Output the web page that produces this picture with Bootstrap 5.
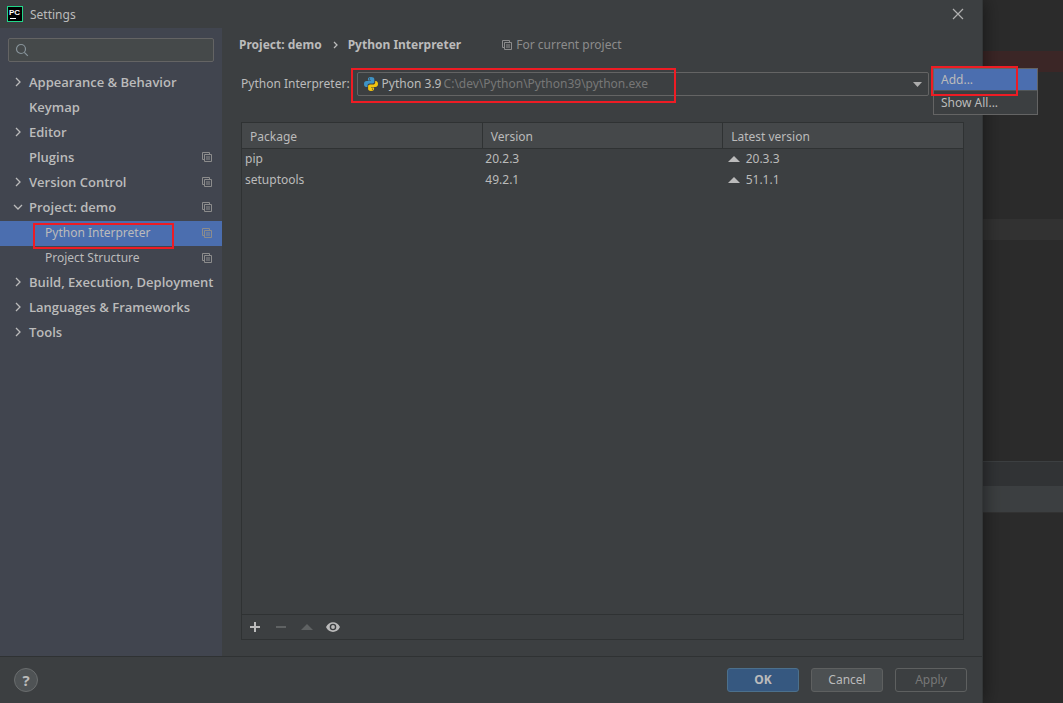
<!DOCTYPE html>
<html lang="en" data-bs-theme="dark">
<head>
<meta charset="utf-8">
<meta name="viewport" content="width=device-width, initial-scale=1">
<title>Settings</title>
<link href="https://cdn.jsdelivr.net/npm/bootstrap@5.3.0/dist/css/bootstrap.min.css" rel="stylesheet">
<style>
  :root { --panel: #3c3f41; --side: #41454f; --line: #2f3233; --ink: #bbbbbb; --soft: #8c8c8c; --edge: #646464; --blue: #4b6eaf; --mark: #ee1c24; }
  body { font-family: "Noto Sans", "Open Sans", sans-serif; font-size: 12px; line-height: 20px; color: var(--ink); background: #2b2b2b; }
  svg { display: block; flex: none; }
  .dialog { background: var(--panel); box-shadow: 0 0 18px rgba(0,0,0,.5); border-right: 1px solid #333637; z-index: 1; min-width: 0; }
  .titlebar { height: 28px; padding: 0 16px 0 7px; }
  .titlebar span { padding-top: 2px; margin-left: 7px; }
  .plain { background: none; border: 0; padding: 0; color: inherit; }
  .sidebar { width: 222px; background: var(--side); }
  .searchbox { height: 24px; margin: 10px 8px 9px; padding: 0 6px; border: 1px solid var(--edge); border-radius: 2px; background: #45494a; }
  .searchbox input { background: none; border: 0; outline: 0; color: var(--ink); min-width: 0; }
  .tree a { height: 25px; padding: 0 10px 3px 12px; color: var(--ink); text-decoration: none; font-family: "Open Sans", "Noto Sans", sans-serif; font-size: 13px; font-weight: 600; }
  .tree .twist { width: 12px; margin-right: 5px; }
  .tree .leaf { padding: 0 10px 1px 45px; font-family: "Noto Sans", sans-serif; font-size: 12px; font-weight: 400; }
  .tree .chosen { background: var(--blue); position: relative; }
  .outline { position: absolute; border: 2px solid var(--mark); pointer-events: none; z-index: 5; }
  .chosen .outline { left: 33px; right: 48px; top: 2px; bottom: -3px; }
  .content { padding: 7px 18px 16px 19px; min-width: 0; }
  .crumbs { height: 20px; margin: 0 0 17px -2px; }
  .crumbs strong { font-weight: 700; }
  .crumbs .chevron { margin: 0 9px; }
  .crumbs .scope { margin-left: 41px; }
  .muted { color: var(--soft); }
  .picker { height: 24px; margin-bottom: 26px; margin-right: -74px; position: relative; }
  .combo { height: 24px; border: 1px solid var(--edge); border-radius: 2px; padding: 0 6px; margin-left: 7px; position: relative; }
  .combo select { appearance: none; background: none; border: 0; outline: 0; padding: 0; color: var(--ink); }
  .combo .path { color: #777777; margin-left: 2px; }
  .combo .outline { left: -7px; width: 325px; top: -5px; bottom: -8px; }
  .actions { width: 105px; margin: -4px 0 0 4px; border: 1px solid var(--edge); background: var(--panel); position: relative; align-self: flex-start; }
  .actions button { display: block; width: 100%; height: 22px; padding: 0 7px; text-align: left; line-height: 20px; }
  .actions button + button { height: 23px; line-height: 22px; }
  .actions .active { background: var(--blue); border-bottom: 1px solid #515658; }
  .actions .outline { left: -3px; width: 87px; top: -3px; height: 30px; }
  .packages { border: 1px solid var(--line); }
  .packages table { table-layout: fixed; }
  .packages th { font-weight: 400; height: 25px; padding: 4px 8px 0; background: #45484a; border-bottom: 1px solid var(--line); }
  .packages th + th { border-left: 1px solid var(--line); }
  .packages td { height: 21px; padding: 0 3px 1px; }
  .packages td svg { margin: 0 6px 0 2px; }
  .tools { height: 25px; border-top: 1px solid var(--line); padding: 0 5px; gap: 10px; }
  .footer-bar { height: 47px; border-top: 1px solid var(--line); padding: 0 15px 0 14px; }
  .footer-buttons { gap: 12px; }
  .footer-bar .btn { --bs-btn-padding-x: 0; --bs-btn-padding-y: 0; --bs-btn-font-size: 12px; width: 72px; height: 24px; line-height: 22px; border: 1px solid #5e6060; border-radius: 3px; color: var(--ink); background: #4c5052; }
  .footer-bar .ok { background: #365880; border-color: #4c708c; font-weight: 700; }
  .footer-bar .btn:disabled { background: none; color: #777777; opacity: 1; }
  .help { width: 24px; height: 24px; border: 1px solid #6a6d6e; border-radius: 50%; background: #4f5355; font-size: 15px; font-weight: 700; }
  .backdrop { width: 80px; }
  .band-error { margin-top: 51px; height: 21px; background: #3b2626; }
  .band-line { margin-top: 147px; height: 21px; background: #323232; }
  .band-head { margin-top: 221px; height: 25px; background: #313335; border-top: 1px solid #3c3f41; }
  .band-bar { height: 27px; background: #3c3f41; border-bottom: 1px solid #323232; }
</style>
</head>
<body>
<svg class="d-none">
  <symbol id="copy" viewBox="0 0 10 10"><path d="M2.500 7.500h-2v-7h7v2M2.500 2.500h7v7h-7zM4 5h4M4 7h4" fill="none" stroke="currentColor"/></symbol>
  <symbol id="right" viewBox="0 0 12 12"><path d="M4 2l4 4-4 4" fill="none" stroke="currentColor" stroke-width="1.3"/></symbol>
  <symbol id="down" viewBox="0 0 12 12"><path d="M2 4l4 4 4-4" fill="none" stroke="currentColor" stroke-width="1.3"/></symbol>
  <symbol id="up" viewBox="0 0 12 6"><path d="M0 6L6 0l6 6z" fill="currentColor"/></symbol>
</svg>
<div class="d-flex vh-100 overflow-hidden">
  <div class="dialog d-flex flex-column flex-grow-1">
    <header class="titlebar d-flex align-items-center">
      <svg width="16" height="16" viewBox="0 0 16 16"><rect x=".5" y=".5" width="15" height="15" fill="#000" stroke="#21d789"/><text x="2" y="9" font-family="Liberation Sans" font-size="8" font-weight="700" fill="#fff">PC</text><path d="M3 12.500h6" stroke="#fff"/></svg>
      <span class="me-auto">Settings</span>
      <button class="plain" aria-label="Close"><svg width="16" height="16" viewBox="0 0 16 16"><path d="M3 3l10 10M13 3L3 13" stroke="#b0b0b0" stroke-width="1.2"/></svg></button>
    </header>
    <div class="d-flex flex-grow-1">
      <aside class="sidebar flex-shrink-0">
        <label class="searchbox d-flex align-items-center">
          <svg width="14" height="14" viewBox="0 0 14 14"><g fill="none" stroke="#87939a" stroke-width="1.2"><circle cx="6" cy="6" r="4.500"/><path d="M9.300 9.300l3.500 3.500"/></g></svg>
          <input class="flex-grow-1" type="text" aria-label="Search settings">
        </label>
        <nav class="tree">
          <a href="#" class="d-flex align-items-center"><svg class="twist" height="12"><use href="#right"/></svg><span>Appearance &amp; Behavior</span></a>
          <a href="#" class="d-flex align-items-center"><span class="twist"></span><span>Keymap</span></a>
          <a href="#" class="d-flex align-items-center"><svg class="twist" height="12"><use href="#right"/></svg><span>Editor</span></a>
          <a href="#" class="d-flex align-items-center"><span class="twist"></span><span class="me-auto">Plugins</span><svg class="muted" width="10" height="10"><use href="#copy"/></svg></a>
          <a href="#" class="d-flex align-items-center"><svg class="twist" height="12"><use href="#right"/></svg><span class="me-auto">Version Control</span><svg class="muted" width="10" height="10"><use href="#copy"/></svg></a>
          <a href="#" class="d-flex align-items-center"><svg class="twist" height="12"><use href="#down"/></svg><span class="me-auto">Project: demo</span><svg class="muted" width="10" height="10"><use href="#copy"/></svg></a>
          <a href="#" class="leaf chosen d-flex align-items-center"><span class="me-auto">Python Interpreter</span><svg class="muted" width="10" height="10"><use href="#copy"/></svg><span class="outline"></span></a>
          <a href="#" class="leaf d-flex align-items-center"><span class="me-auto">Project Structure</span><svg class="muted" width="10" height="10"><use href="#copy"/></svg></a>
          <a href="#" class="d-flex align-items-center"><svg class="twist" height="12"><use href="#right"/></svg><span class="text-nowrap">Build, Execution, Deployment</span></a>
          <a href="#" class="d-flex align-items-center"><svg class="twist" height="12"><use href="#right"/></svg><span>Languages &amp; Frameworks</span></a>
          <a href="#" class="d-flex align-items-center"><svg class="twist" height="12"><use href="#right"/></svg><span>Tools</span></a>
        </nav>
      </aside>
      <main class="content d-flex flex-column flex-grow-1">
        <div class="crumbs d-flex align-items-center">
          <strong>Project: demo</strong>
          <svg class="chevron" width="8" height="8" viewBox="0 0 8 8"><path d="M3 1l3 3-3 3" fill="none" stroke="#bbb" stroke-width="1.300"/></svg>
          <strong>Python Interpreter</strong>
          <svg class="muted scope me-1" width="10" height="10"><use href="#copy"/></svg>
          <span class="muted">For current project</span>
        </div>
        <div class="picker d-flex align-items-center">
          <label for="interpreter" class="text-nowrap">Python Interpreter:</label>
          <div class="combo d-flex align-items-center flex-grow-1">
            <svg class="me-1" width="14" height="14" viewBox="0 0 16 16"><path d="M8 0C5 0 4.500 1.200 4.500 2.500V4H8v.7H3C1 4.700 0 6 0 8s1 3.500 2.500 3.500H4V9.700C4 8.300 5 7.300 6.500 7.300h3.300c1.200 0 2-.8 2-2V2.500C11.800 1 10.500 0 8 0z" fill="#3f93c5"/><path d="M8 16c3 0 3.500-1.200 3.500-2.500V12H8v-.7h5c2 0 3-1.300 3-3.300s-1-3.500-2.500-3.500H12.800v1.800c0 1.400-1.200 2.400-2.500 2.400H7c-1.200 0-2.300.8-2.300 2v2.800C4.700 15 5.500 16 8 16z" fill="#f2c40f"/><circle cx="6.300" cy="2.200" r=".7" fill="#3c3f41"/><circle cx="9.700" cy="13.800" r=".7" fill="#3c3f41"/></svg>
            <select id="interpreter"><option>Python 3.9</option></select>
            <span class="path me-auto">C:\dev\Python\Python39\python.exe</span>
            <svg width="9" height="5" viewBox="0 0 9 5"><path d="M0 0h9L4.500 5z" fill="#adadad"/></svg>
            <span class="outline"></span>
          </div>
          <div class="actions">
            <button class="plain active">Add...</button>
            <button class="plain">Show All...</button>
            <span class="outline"></span>
          </div>
        </div>
        <section class="packages d-flex flex-column flex-grow-1">
          <table class="w-100">
            <thead><tr><th>Package</th><th>Version</th><th>Latest version</th></tr></thead>
            <tbody>
              <tr><td>pip</td><td>20.2.3</td><td><div class="d-flex align-items-center"><svg width="12" height="6"><use href="#up"/></svg>20.3.3</div></td></tr>
              <tr><td>setuptools</td><td>49.2.1</td><td><div class="d-flex align-items-center"><svg width="12" height="6"><use href="#up"/></svg>51.1.1</div></td></tr>
            </tbody>
          </table>
          <div class="tools d-flex align-items-center mt-auto">
            <button class="plain" aria-label="Install"><svg width="16" height="16" viewBox="0 0 16 16"><path d="M8 3v10M3 8h10" stroke="#bbb" stroke-width="2"/></svg></button>
            <button class="plain" aria-label="Uninstall" disabled><svg width="16" height="16" viewBox="0 0 16 16"><path d="M3 8h10" stroke="#5f6263" stroke-width="2"/></svg></button>
            <button class="plain" aria-label="Upgrade" disabled><svg width="16" height="16" viewBox="0 0 16 16"><path d="M2 11l6-6 6 6z" fill="#5f6263"/></svg></button>
            <button class="plain" aria-label="Show early releases"><svg width="16" height="16" viewBox="0 0 16 16"><path d="M1 8c3-6.500 11-6.500 14 0-3 6.500-11 6.500-14 0z" fill="#bbb"/><circle cx="8" cy="8" r="2.600" fill="#bbb" stroke="#3c3f41" stroke-width="1.400"/></svg></button>
          </div>
        </section>
      </main>
    </div>
    <footer class="footer-bar d-flex align-items-center">
      <button class="plain help me-auto" aria-label="Help">?</button>
      <div class="footer-buttons d-flex">
        <button class="btn ok">OK</button>
        <button class="btn">Cancel</button>
        <button class="btn" disabled>Apply</button>
      </div>
    </footer>
  </div>
  <div class="backdrop flex-shrink-0">
    <div class="band-error"></div>
    <div class="band-line"></div>
    <div class="band-head"></div>
    <div class="band-bar"></div>
  </div>
</div>
<script src="https://cdn.jsdelivr.net/npm/bootstrap@5.3.0/dist/js/bootstrap.bundle.min.js"></script>
</body>
</html>
